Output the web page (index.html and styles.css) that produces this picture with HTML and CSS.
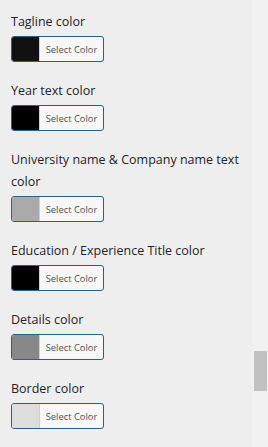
FILE: index.html
```html
<!DOCTYPE html>
<html>
<head>
<meta charset="utf-8">
<link rel="stylesheet" href="styles.css">
</head>
<body>
<div class="panel">
  <div class="control">
    <div class="label">Tagline color</div>
    <button class="picker"><span class="swatch" style="background:#111111"></span><span class="txt">Select Color</span></button>
  </div>
  <div class="control">
    <div class="label">Year text color</div>
    <button class="picker"><span class="swatch" style="background:#000000"></span><span class="txt">Select Color</span></button>
  </div>
  <div class="control">
    <div class="label">University name &amp; Company name text color</div>
    <button class="picker"><span class="swatch" style="background:#aaaaaa"></span><span class="txt">Select Color</span></button>
  </div>
  <div class="control">
    <div class="label">Education / Experience Title color</div>
    <button class="picker"><span class="swatch" style="background:#000000"></span><span class="txt">Select Color</span></button>
  </div>
  <div class="control">
    <div class="label">Details color</div>
    <button class="picker"><span class="swatch" style="background:#888888"></span><span class="txt">Select Color</span></button>
  </div>
  <div class="control">
    <div class="label">Border color</div>
    <button class="picker"><span class="swatch" style="background:#dddddd"></span><span class="txt">Select Color</span></button>
  </div>
</div>
<div class="scrolltrack"><div class="thumb"></div></div>
</body>
</html>
```
FILE: styles.css
```css
html, body {
  margin: 0;
  padding: 0;
  background: #eeeeee;
  height: 100%;
  overflow: hidden;
}
body {
  font-family: "Open Sans", "Noto Sans", sans-serif;
  color: #1f2428;
  position: relative;
}
.panel {
  padding: 10px 0 0 11px;
  width: 240px;
  display: flex;
  flex-direction: column;
  gap: 17px;
}
.control {
  display: flex;
  flex-direction: column;
  align-items: flex-start;
  gap: 3px;
}
.label {
  font-size: 12.5px;
  line-height: 22px;
  padding-top: 1px;
}
.picker {
  display: flex;
  align-items: stretch;
  width: 93px;
  height: 26px;
  padding: 0;
  margin: 0;
  border: 1px solid #2e6178;
  border-radius: 3px;
  background: #f7f7f7;
  overflow: hidden;
  cursor: pointer;
  box-sizing: border-box;
}
.swatch {
  width: 27px;
  flex: none;
  border-right: 1px solid #d0d0d0;
}
.txt {
  flex: 1;
  font-family: "Open Sans", "Noto Sans", sans-serif;
  font-size: 9.4px;
  line-height: 25px;
  color: #555555;
  text-align: center;
}
.scrolltrack {
  position: absolute;
  top: 0;
  right: 0;
  width: 16px;
  height: 100%;
  background: #f1f1f1;
}
.thumb {
  position: absolute;
  left: 2px;
  right: 1px;
  top: 351px;
  height: 40px;
  background: #c1c1c1;
}
```
